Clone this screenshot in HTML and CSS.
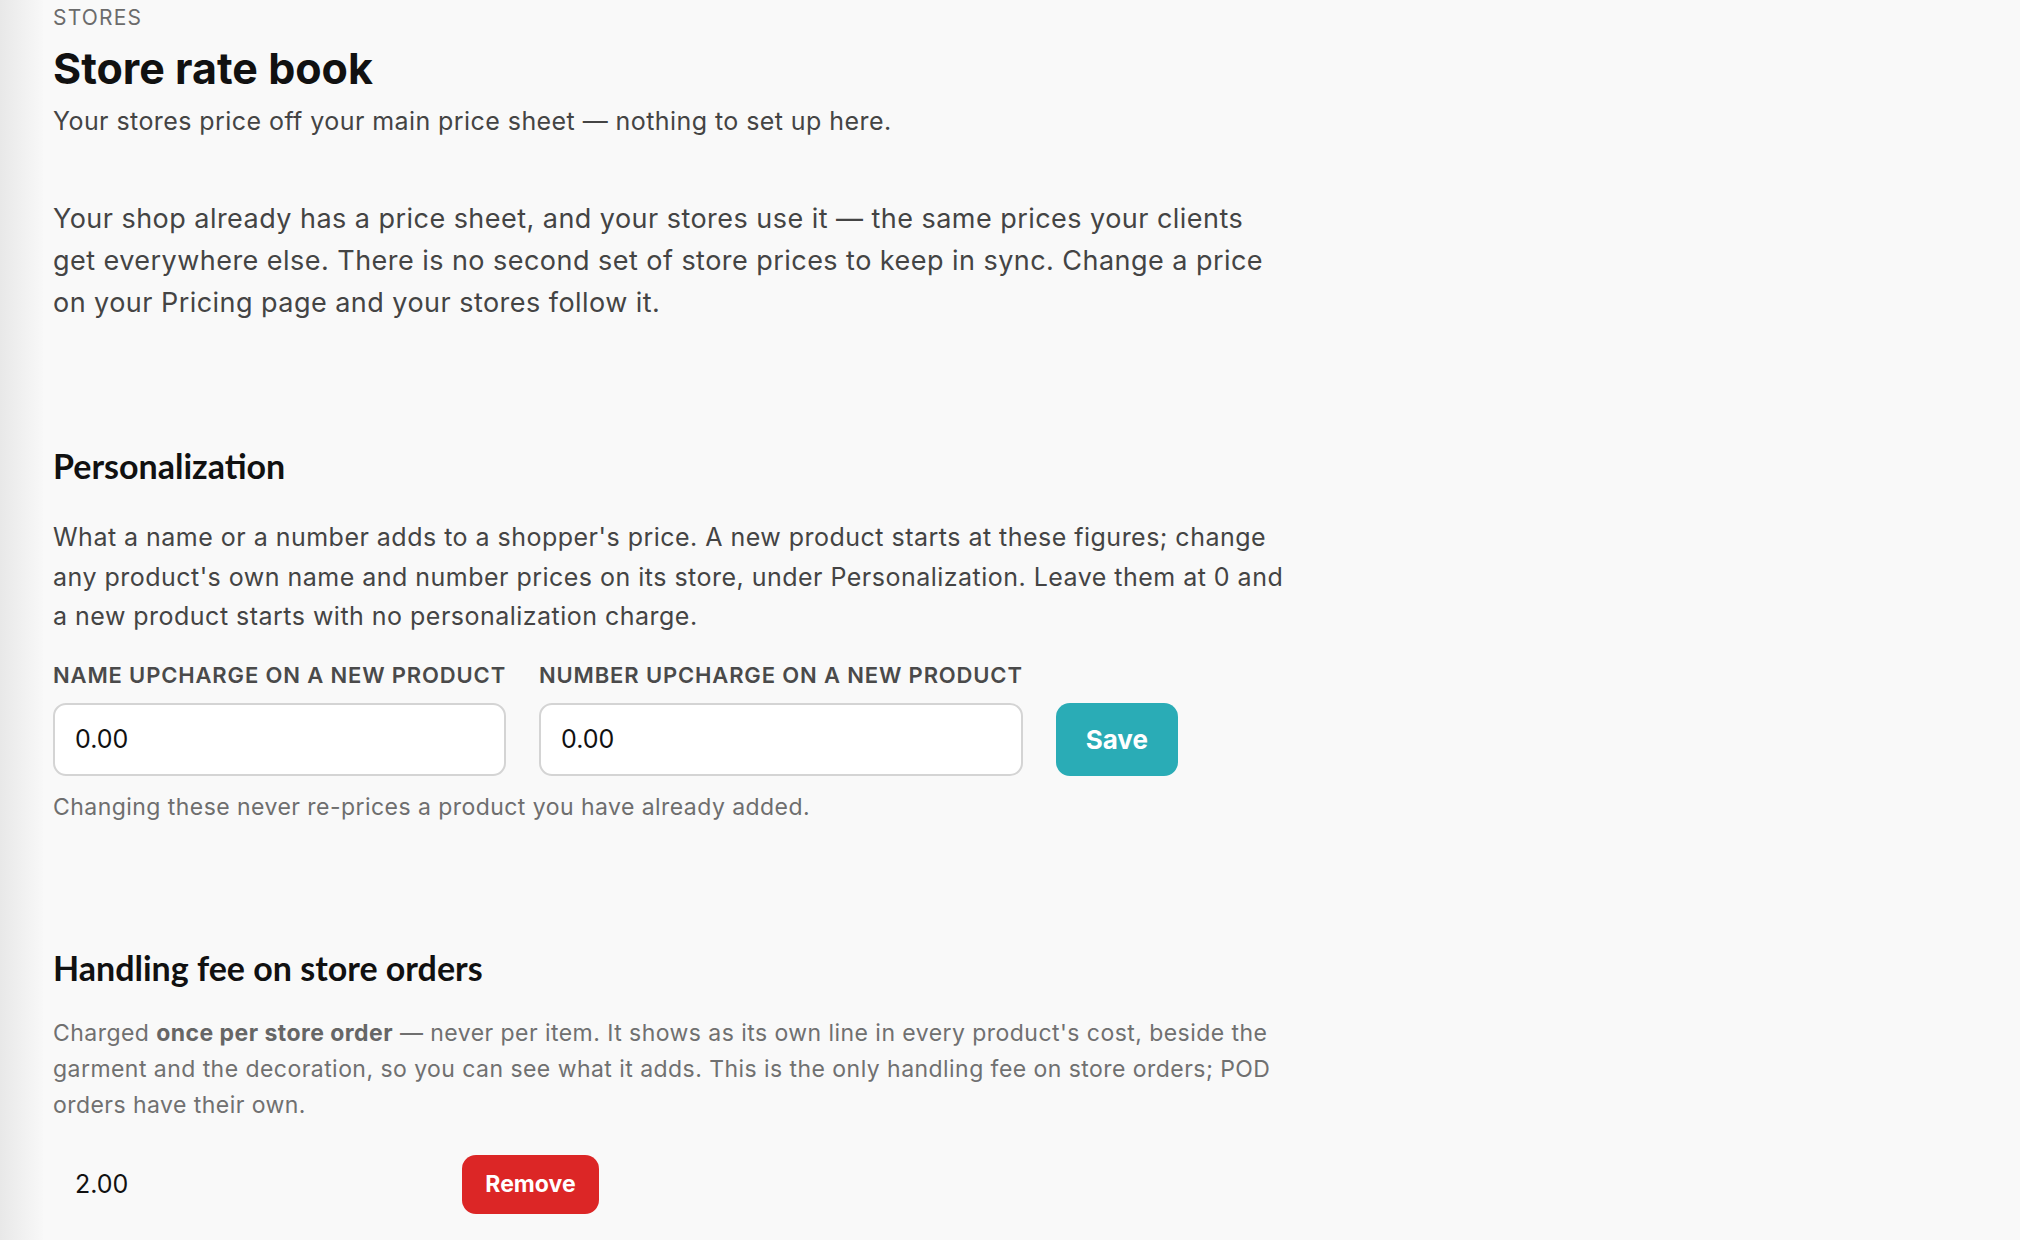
FILE: index.html
```html
<!DOCTYPE html>
<html lang="en">
  <head>
    <meta charset="UTF-8" />
    <title>Store rate book</title>
    <link rel="stylesheet" href="styles.css">
  </head>
  <body>
    <div class="edge"></div>
    <main class="page">
      <p class="eyebrow">STORES</p>
      <h1 class="title">Store rate book</h1>
      <p class="subtitle">Your stores price off your main price sheet — nothing to set up here.</p>

      <p class="intro">
        Your shop already has a price sheet, and your stores use it — the same prices your clients
        get everywhere else. There is no second set of store prices to keep in sync. Change a price
        on your Pricing page and your stores follow it.
      </p>

      <section class="block">
        <h2 class="block-title">Personalization</h2>
        <p class="block-text">
          What a name or a number adds to a shopper's price. A new product starts at these figures; change
          any product's own name and number prices on its store, under Personalization. Leave them at 0 and
          a new product starts with no personalization charge.
        </p>
        <div class="field-row">
          <div class="field">
            <label class="field-label" for="name-up">NAME UPCHARGE ON A NEW PRODUCT</label>
            <input class="field-input" id="name-up" type="text" value="0.00">
          </div>
          <div class="field">
            <label class="field-label" for="num-up">NUMBER UPCHARGE ON A NEW PRODUCT</label>
            <input class="field-input" id="num-up" type="text" value="0.00">
          </div>
          <button class="btn btn-save">Save</button>
        </div>
        <p class="note">Changing these never re-prices a product you have already added.</p>
      </section>

      <section class="block block-fee">
        <h2 class="block-title">Handling fee on store orders</h2>
        <p class="fee-text">
          Charged <b>once per store order</b> — never per item. It shows as its own line in every product's cost, beside the
          garment and the decoration, so you can see what it adds. This is the only handling fee on store orders; POD
          orders have their own.
        </p>
        <div class="fee-row">
          <input class="fee-input" type="text" value="2.00">
          <button class="btn btn-remove">Remove</button>
        </div>
      </section>
    </main>
  </body>
</html>
```

FILE: styles.css
```css
html, body {
  margin: 0;
  height: 100%;
}

body {
  background: #f9f9f9;
  font-family: "Inter", "Liberation Sans", sans-serif;
  color: #444;
  display: flex;
}

.edge {
  width: 43px;
  flex-shrink: 0;
  background: linear-gradient(to right, #e8e8e8, #f1f1f1 55%, #f8f8f8);
}

.page {
  padding: 5px 0 0 10px;
  width: 1236px;
}

.eyebrow {
  margin: 0;
  font-size: 21px;
  letter-spacing: 1.2px;
  color: #6b6b6b;
  line-height: 26px;
}

.title {
  margin: 11px 0 0;
  font-size: 43px;
  font-weight: 700;
  color: #111;
  line-height: 52px;
}

.subtitle {
  margin: 10px 0 0;
  font-size: 25px;
  line-height: 34px;
  letter-spacing: 0.43px;
}

.intro {
  margin: 60px 0 0;
  font-size: 27px;
  line-height: 42px;
  letter-spacing: 0.46px;
}

.block {
  margin-top: 121px;
}

.block-title {
  margin: 0;
  font-family: "Lato", "Liberation Sans", sans-serif;
  font-size: 34px;
  font-weight: 700;
  color: #111;
  line-height: 42px;
}

.block-text {
  margin: 31px 0 0;
  font-size: 25px;
  line-height: 39.5px;
  letter-spacing: 0.48px;
}

.field-row {
  display: flex;
  align-items: flex-end;
  gap: 33px;
  margin-top: 24px;
}

.field {
  display: flex;
  flex-direction: column;
  gap: 14px;
}

.field-label {
  font-size: 22px;
  font-weight: 600;
  letter-spacing: 0.85px;
  color: #4a4a4a;
  line-height: 28px;
}

.field-input {
  box-sizing: border-box;
  height: 73px;
  padding: 0 20px;
  border: 2px solid #d4d4d4;
  border-radius: 13px;
  background: #fff;
  font-family: inherit;
  font-size: 25px;
  color: #111;
}

.btn {
  border: none;
  color: #fff;
  font-family: inherit;
  font-weight: 700;
  border-radius: 14px;
  cursor: pointer;
}

.btn-save {
  width: 122px;
  height: 73px;
  background: #2aacb6;
  font-size: 26px;
}

.note {
  margin: 16px 0 0;
  font-size: 23px;
  line-height: 30px;
  color: #6e6e6e;
  letter-spacing: 0.45px;
}

.block-fee {
  margin-top: 125px;
}

.fee-text {
  margin: 26px 0 0;
  font-size: 23px;
  line-height: 36px;
  color: #707070;
  letter-spacing: 0.45px;
}

.fee-text b {
  color: #666;
  font-weight: 700;
}

.fee-row {
  display: flex;
  align-items: center;
  gap: 32px;
  margin-top: 32px;
}

.fee-input {
  box-sizing: border-box;
  width: 377px;
  height: 59px;
  padding: 0 22px;
  border: none;
  background: transparent;
  font-family: inherit;
  font-size: 25px;
  color: #111;
}

.btn-remove {
  width: 137px;
  height: 59px;
  background: #dc2626;
  font-size: 23px;
}
```
